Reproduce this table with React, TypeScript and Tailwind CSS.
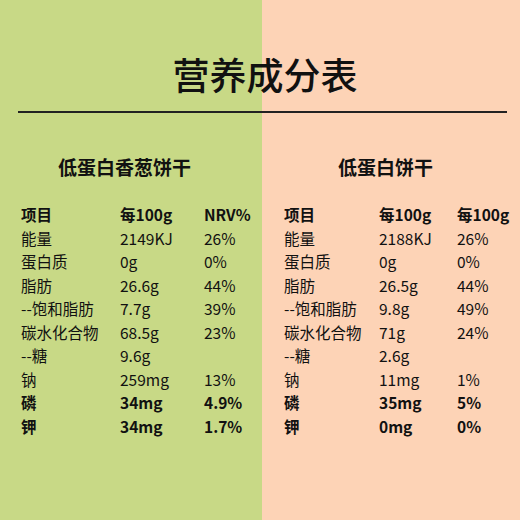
import React from "react";

type Row = { name: string; v: string; p: string; bold?: boolean };

const left: Row[] = [
  { name: "项目", v: "每100g", p: "NRV%", bold: true },
  { name: "能量", v: "2149KJ", p: "26%" },
  { name: "蛋白质", v: "0g", p: "0%" },
  { name: "脂肪", v: "26.6g", p: "44%" },
  { name: "--饱和脂肪", v: "7.7g", p: "39%" },
  { name: "碳水化合物", v: "68.5g", p: "23%" },
  { name: "--糖", v: "9.6g", p: "" },
  { name: "钠", v: "259mg", p: "13%" },
  { name: "磷", v: "34mg", p: "4.9%", bold: true },
  { name: "钾", v: "34mg", p: "1.7%", bold: true },
];

const right: Row[] = [
  { name: "项目", v: "每100g", p: "每100g", bold: true },
  { name: "能量", v: "2188KJ", p: "26%" },
  { name: "蛋白质", v: "0g", p: "0%" },
  { name: "脂肪", v: "26.5g", p: "44%" },
  { name: "--饱和脂肪", v: "9.8g", p: "49%" },
  { name: "碳水化合物", v: "71g", p: "24%" },
  { name: "--糖", v: "2.6g", p: "" },
  { name: "钠", v: "11mg", p: "1%" },
  { name: "磷", v: "35mg", p: "5%", bold: true },
  { name: "钾", v: "0mg", p: "0%", bold: true },
];

function Table({ rows, c1, c2 }: { rows: Row[]; c1: string; c2: string }) {
  return (
    <div className="flex flex-col">
      {rows.map((r, i) => (
        <div key={i} className={`flex h-[23.5px] items-center text-[15.5px] leading-none ${r.bold ? "font-semibold" : "font-normal"}`}>
          <span className={c1}>{r.name}</span>
          <span className={c2}>{r.v}</span>
          <span>{r.p}</span>
        </div>
      ))}
    </div>
  );
}

export default function App() {
  return (
    <div
      className="w-[520px] h-[520px] overflow-hidden text-[#111] bg-[linear-gradient(to_right,#c8d986_262px,#fdd3b6_262px)]"
      style={{ fontFamily: '"Noto Sans CJK SC", "Noto Sans", sans-serif' }}
    >
      <div className="pt-[53px] flex justify-center pl-[10px]">
        <h1 className="text-[37px] leading-[42px] font-medium">营养成分表</h1>
      </div>
      <div className="mt-[16px] ml-[18px] mr-[13px] h-[2px] bg-[#222]" />
      <div className="flex mt-[42px]">
        <div className="w-[262px] flex flex-col">
          <div className="pl-[58px] text-[19px] leading-[24px] font-semibold">低蛋白香葱饼干</div>
          <div className="pl-[21px] mt-[24px]">
            <Table rows={left} c1="w-[99px]" c2="w-[84px]" />
          </div>
        </div>
        <div className="flex-1 flex flex-col">
          <div className="pl-[76px] text-[19px] leading-[24px] font-semibold">低蛋白饼干</div>
          <div className="pl-[22px] mt-[24px]">
            <Table rows={right} c1="w-[95px]" c2="w-[78px]" />
          </div>
        </div>
      </div>
    </div>
  );
}
